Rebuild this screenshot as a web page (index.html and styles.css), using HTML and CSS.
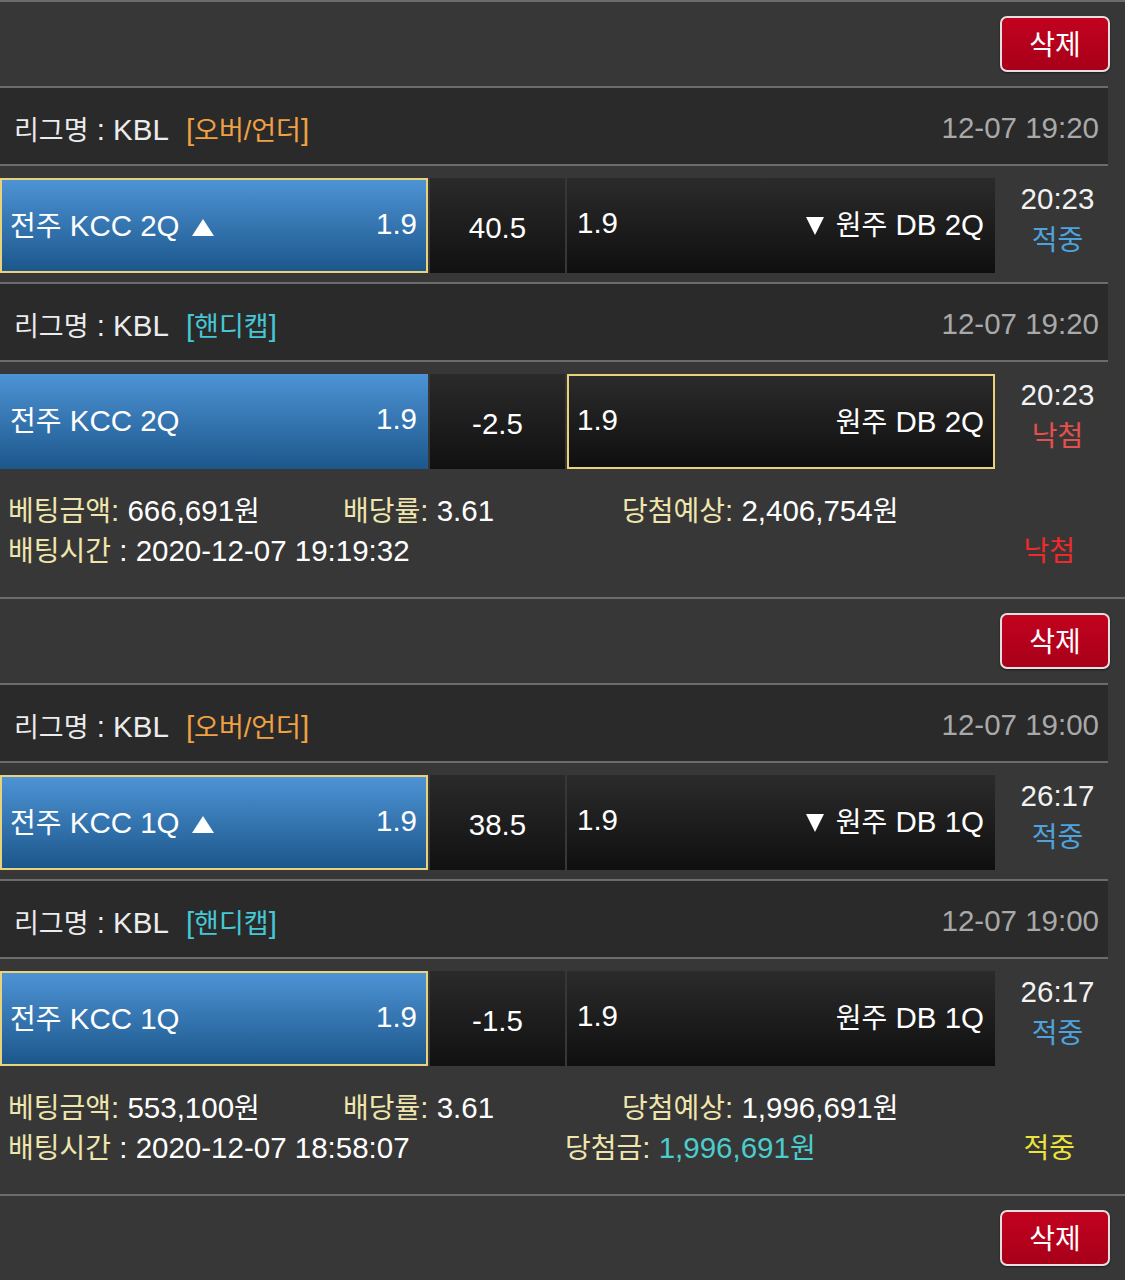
FILE: index.html
```html
<!DOCTYPE html>
<html lang="ko">
<head>
<meta charset="utf-8">
<title>베팅내역</title>
<link rel="stylesheet" href="styles.css">
</head>
<body>
<div class="slip">
  <div class="slip-top"><button class="del">삭제</button></div>
  <div class="game">
    <div class="league"><span class="lname"><span class="ko">리그명</span> : KBL</span><span class="tag tag-ou">[<span class="ko">오버/언더</span>]</span><span class="date">12-07 19:20</span></div>
    <div class="bet">
      <div class="pick home picked"><span class="team"><span class="ko">전주</span> KCC 2Q <i class="tri up"></i></span><span class="odd">1.9</span></div>
      <div class="mid">40.5</div>
      <div class="pick away"><span class="odd">1.9</span><span class="team"><i class="tri down"></i> <span class="ko">원주</span> DB 2Q</span></div>
      <div class="status"><span class="clock">20:23</span><span class="res hit">적중</span></div>
    </div>
  </div>
  <div class="game">
    <div class="league"><span class="lname"><span class="ko">리그명</span> : KBL</span><span class="tag tag-hc">[<span class="ko">핸디캡</span>]</span><span class="date">12-07 19:20</span></div>
    <div class="bet">
      <div class="pick home"><span class="team"><span class="ko">전주</span> KCC 2Q</span><span class="odd">1.9</span></div>
      <div class="mid">-2.5</div>
      <div class="pick away picked"><span class="odd">1.9</span><span class="team"><span class="ko">원주</span> DB 2Q</span></div>
      <div class="status"><span class="clock">20:23</span><span class="res miss">낙첨</span></div>
    </div>
  </div>
  <div class="summary">
    <div class="sum-row">
      <span class="c1"><span class="lbl ko">베팅금액</span><span class="lbl">:</span> 666,691<span class="ko">원</span></span>
      <span class="c2"><span class="lbl ko">배당률</span><span class="lbl">:</span> 3.61</span>
      <span class="c3"><span class="lbl ko">당첨예상</span><span class="lbl">:</span> 2,406,754<span class="ko">원</span></span>
    </div>
    <div class="sum-row">
      <span class="c1 wide"><span class="lbl ko">배팅시간</span> : 2020-12-07 19:19:32</span>
      <span class="final final-miss">낙첨</span>
    </div>
  </div>
</div>

<div class="slip">
  <div class="slip-top"><button class="del">삭제</button></div>
  <div class="game">
    <div class="league"><span class="lname"><span class="ko">리그명</span> : KBL</span><span class="tag tag-ou">[<span class="ko">오버/언더</span>]</span><span class="date">12-07 19:00</span></div>
    <div class="bet">
      <div class="pick home picked"><span class="team"><span class="ko">전주</span> KCC 1Q <i class="tri up"></i></span><span class="odd">1.9</span></div>
      <div class="mid">38.5</div>
      <div class="pick away"><span class="odd">1.9</span><span class="team"><i class="tri down"></i> <span class="ko">원주</span> DB 1Q</span></div>
      <div class="status"><span class="clock">26:17</span><span class="res hit">적중</span></div>
    </div>
  </div>
  <div class="game">
    <div class="league"><span class="lname"><span class="ko">리그명</span> : KBL</span><span class="tag tag-hc">[<span class="ko">핸디캡</span>]</span><span class="date">12-07 19:00</span></div>
    <div class="bet">
      <div class="pick home picked"><span class="team"><span class="ko">전주</span> KCC 1Q</span><span class="odd">1.9</span></div>
      <div class="mid">-1.5</div>
      <div class="pick away"><span class="odd">1.9</span><span class="team"><span class="ko">원주</span> DB 1Q</span></div>
      <div class="status"><span class="clock">26:17</span><span class="res hit">적중</span></div>
    </div>
  </div>
  <div class="summary">
    <div class="sum-row">
      <span class="c1"><span class="lbl ko">베팅금액</span><span class="lbl">:</span> 553,100<span class="ko">원</span></span>
      <span class="c2"><span class="lbl ko">배당률</span><span class="lbl">:</span> 3.61</span>
      <span class="c3"><span class="lbl ko">당첨예상</span><span class="lbl">:</span> 1,996,691<span class="ko">원</span></span>
    </div>
    <div class="sum-row">
      <span class="c1 wide2"><span class="lbl ko">배팅시간</span> : 2020-12-07 18:58:07</span>
      <span class="c4"><span class="lbl ko">당첨금</span><span class="lbl">:</span> <span class="won">1,996,691<span class="ko">원</span></span></span>
      <span class="final final-hit">적중</span>
    </div>
  </div>
</div>

<div class="slip">
  <div class="slip-top"><button class="del">삭제</button></div>
</div>
</body>
</html>
```

FILE: styles.css
```css
html, body {
  margin: 0;
  padding: 0;
  background: #373737;
}
body {
  font-family: "Liberation Sans", "Noto Sans CJK KR", sans-serif;
  color: #ffffff;
  width: 1125px;
  height: 1280px;
  overflow: hidden;
}
.ko {
  font-size: 28px;
}
.slip {
  border-top: 2px solid #6c6c6c;
}
.slip-top {
  height: 84px;
  display: flex;
  justify-content: flex-end;
  align-items: flex-start;
  padding-right: 15px;
  box-sizing: border-box;
  padding-top: 14px;
}
.del {
  width: 110px;
  height: 56px;
  border: 2px solid #e8dede;
  border-radius: 7px;
  background: linear-gradient(#c2021f, #a80019);
  color: #ffffff;
  font-family: "Liberation Sans", "Noto Sans CJK KR", sans-serif;
  font-size: 28px;
  padding: 0 0 2px 0;
  box-sizing: border-box;
  box-shadow: 0 1px 2px rgba(0,0,0,0.5);
}
.league {
  width: 1108px;
  height: 80px;
  box-sizing: border-box;
  border-top: 2px solid #6c6c6c;
  border-bottom: 2px solid #6c6c6c;
  background: #2a2a2a;
  display: flex;
  align-items: center;
  padding: 4px 9px 0 14px;
  font-size: 29.5px;
}
.league .ko {
  font-size: 27px;
}
.lname {
  color: #ececec;
}
.tag {
  margin-left: 17px;
}
.tag-ou { color: #f0a143; }
.tag-hc { color: #45c7d6; }
.date {
  margin-left: auto;
  color: #a9a9a9;
}
.bet {
  display: flex;
  height: 95px;
  margin: 12px 0 9px 0;
  gap: 2px;
}
.game:nth-last-child(2) .bet { margin-bottom: 0; }
.pick {
  width: 428px;
  box-sizing: border-box;
  display: flex;
  align-items: center;
  justify-content: space-between;
  font-size: 29.5px;
  padding: 0 11px 6px 10px;
  background: linear-gradient(#2b2b2b, #0f0f0f);
}
.pick.home {
  background: linear-gradient(#4d93d5, #1c578b);
}
.pick.picked {
  border: 2px solid #e9d27c;
  padding: 0 9px 4px 8px;
}
.tri {
  display: inline-block;
  width: 0;
  height: 0;
  vertical-align: baseline;
}
.tri.up {
  margin-left: 4px;
  border-left: 11px solid transparent;
  border-right: 11px solid transparent;
  border-bottom: 17px solid #ffffff;
}
.tri.down {
  margin-right: 4px;
  border-left: 9px solid transparent;
  border-right: 9px solid transparent;
  border-top: 18px solid #ffffff;
}
.mid {
  width: 135px;
  display: flex;
  align-items: center;
  justify-content: center;
  padding-top: 5px;
  box-sizing: border-box;
  font-size: 29.5px;
  background: linear-gradient(#2a2a2a, #111111);
}
.status {
  width: 121px;
  display: flex;
  flex-direction: column;
  align-items: center;
  font-size: 29.5px;
  line-height: 42px;
}
.clock { color: #f2f2f2; }
.res { font-size: 28px; }
.res.hit { color: #4da3de; }
.res.miss { color: #e4504d; }
.summary {
  height: 128px;
  box-sizing: border-box;
  padding: 22px 0 0 8px;
  font-size: 29.5px;
  line-height: 40px;
}
.sum-row {
  display: flex;
  align-items: baseline;
  white-space: nowrap;
  height: 40px;
}
.lbl { color: #efe6ad; }
.c1 { width: 335px; }
.c2 { width: 279px; }
.c1.wide { width: auto; }
.c1.wide2 { width: 557px; }
.won { color: #4ccccc; }
.final {
  font-size: 28px;
  margin-left: auto;
  margin-right: 50px;
}
.final-miss { color: #ee2a2a; }
.final-hit { color: #ece43a; }
```
